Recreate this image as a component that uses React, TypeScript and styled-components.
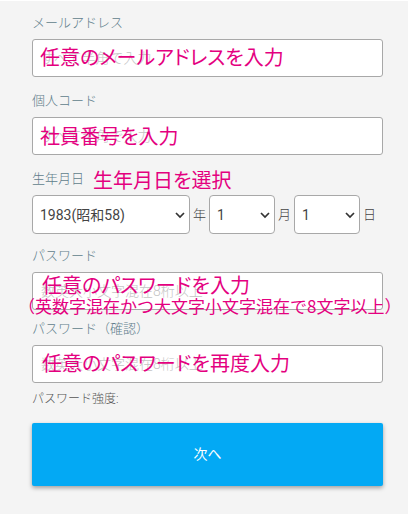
import React from "react";
import styled, { createGlobalStyle } from "styled-components";

const GlobalStyle = createGlobalStyle`
  * { box-sizing: border-box; }
  body {
    margin: 0;
    background: #ffffff;
    font-family: Roboto, "Noto Sans CJK JP", sans-serif;
    font-size: 13px;
    line-height: 20px;
    color: #444444;
  }
`;

const Page = styled.main`
  margin: 1px 3px 0 0;
  padding: 12px 25px 28px 32px;
  background: #f4f4f4;
`;

const Form = styled.form`
  display: flex;
  flex-direction: column;
`;

const Field = styled.div<{ $gap: number }>`
  position: relative;
  display: flex;
  flex-direction: column;
  gap: 6px;
  margin-bottom: ${(p) => p.$gap}px;
`;

const Label = styled.label`
  align-self: flex-start;
  font-weight: 300;
  color: #607d8b;
`;

const TextBox = styled.input`
  width: 100%;
  height: 38px;
  padding: 0 8px;
  border: 1px solid #a8a8a8;
  border-radius: 3px;
  background: #ffffff;
  font: inherit;
  font-size: 14px;
  color: #444444;
  &::placeholder {
    color: #c4c4c4;
    font-weight: 300;
    opacity: 1;
  }
`;

const Note = styled.span<{ $top: number; $left: number }>`
  position: absolute;
  z-index: 1;
  top: ${(p) => p.$top}px;
  left: ${(p) => p.$left}px;
  font-family: "Noto Sans CJK JP", sans-serif;
  font-size: 20px;
  line-height: 24px;
  font-feature-settings: "palt";
  white-space: nowrap;
  color: #e4007f;
  pointer-events: none;
`;

const SmallNote = styled(Note)`
  font-size: 17px;
  font-feature-settings: normal;
`;

const DateRow = styled.div`
  display: flex;
  align-items: center;
  gap: 3px;
`;

const SelectWrap = styled.span<{ $width: number }>`
  position: relative;
  display: flex;
  width: ${(p) => p.$width}px;
`;

const Select = styled.select`
  appearance: none;
  width: 100%;
  height: 39px;
  padding: 0 7px;
  border: 1px solid #a8a8a8;
  border-radius: 4px;
  background: #ffffff;
  font: inherit;
  font-size: 14px;
  color: #444444;
`;

const Chevron = styled.svg`
  position: absolute;
  right: 5px;
  top: 16px;
  width: 10px;
  height: 8px;
  pointer-events: none;
`;

const Unit = styled.span`
  width: 13px;
  font-weight: 300;
`;

const Strength = styled.p`
  margin: 0 0 14px;
  font-size: 12px;
  font-weight: 300;
  color: #555555;
`;

const Submit = styled.button`
  height: 63px;
  padding: 0 0 2px;
  border: 0;
  border-radius: 2px;
  background: #03a9f4;
  box-shadow: 0 2px 4px rgba(0, 0, 0, 0.35);
  font: inherit;
  font-size: 14px;
  color: #ffffff;
`;

function DatePart({ id, label, width, value, unit }: {
  id: string; label: string; width: number; value: string; unit: string;
}) {
  return (
    <>
      <SelectWrap $width={width}>
        <Select id={id} aria-label={label} defaultValue={value}>
          <option>{value}</option>
        </Select>
        <Chevron viewBox="0 0 10 8" aria-hidden="true">
          <path d="M1 2l4 4 4-4" fill="none" stroke="#333333" strokeWidth="1.7" />
        </Chevron>
      </SelectWrap>
      <Unit>{unit}</Unit>
    </>
  );
}

export default function App() {
  return (
    <>
      <GlobalStyle />
      <Page>
        <Form onSubmit={(e) => e.preventDefault()}>
          <Field $gap={14}>
            <Label htmlFor="email">メールアドレス</Label>
            <TextBox id="email" type="email" placeholder="すべて半角で入力" />
            <Note $top={32} $left={8}>任意のメールアドレスを入力</Note>
          </Field>
          <Field $gap={14}>
            <Label htmlFor="code">個人コード</Label>
            <TextBox id="code" type="text" placeholder="すべて半角で入力" />
            <Note $top={33} $left={8}>社員番号を入力</Note>
          </Field>
          <Field $gap={12}>
            <Label htmlFor="year">生年月日</Label>
            <Note $top={-1} $left={61}>生年月日を選択</Note>
            <DateRow>
              <DatePart id="year" label="年" width={158} value="1983(昭和58)" unit="年" />
              <DatePart id="month" label="月" width={66} value="1" unit="月" />
              <DatePart id="day" label="日" width={66} value="1" unit="日" />
            </DateRow>
          </Field>
          <Field $gap={9}>
            <Label htmlFor="password">パスワード</Label>
            <TextBox id="password" type="password" placeholder="数英大小文字混在8桁以上" />
            <Note $top={27} $left={10}>任意のパスワードを入力</Note>
            <SmallNote $top={48} $left={-14}>（英数字混在かつ大文字小文字混在で8文字以上）</SmallNote>
          </Field>
          <Field $gap={6}>
            <Label htmlFor="confirm">パスワード（確認）</Label>
            <TextBox id="confirm" type="password" placeholder="数英大小文字混在8桁以上" />
            <Note $top={32} $left={10}>任意のパスワードを再度入力</Note>
          </Field>
          <Strength>パスワード強度:</Strength>
          <Submit type="submit">次へ</Submit>
        </Form>
      </Page>
    </>
  );
}
